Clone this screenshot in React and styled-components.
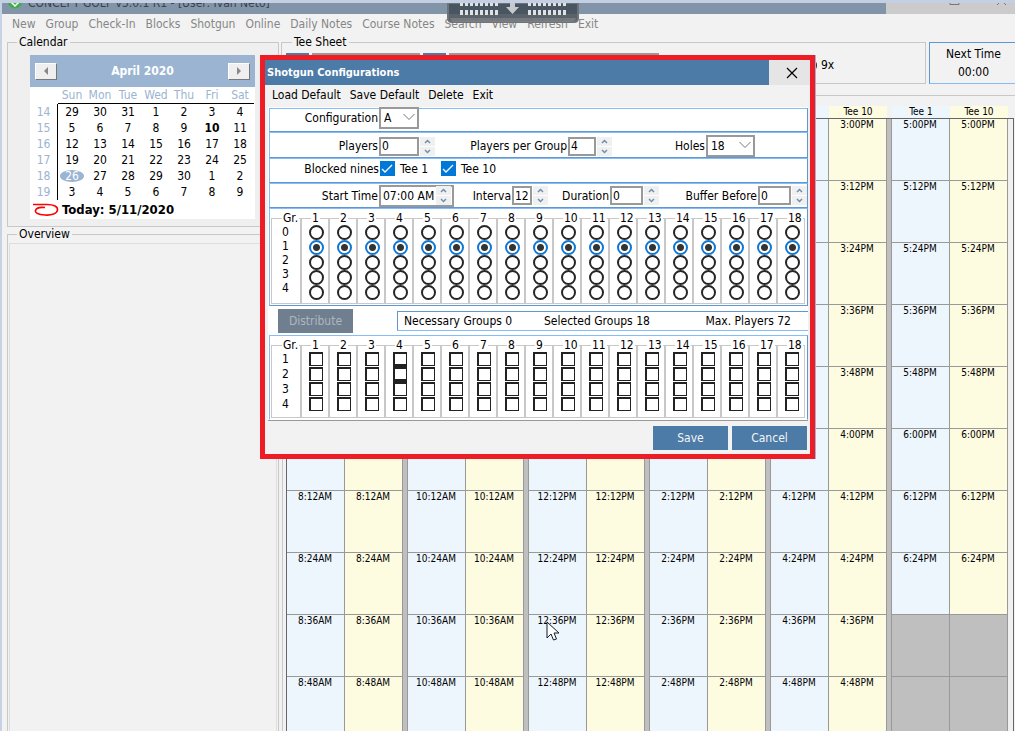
import React from "react";
import styled, { createGlobalStyle, css } from "styled-components";

const Global = createGlobalStyle`
  * { box-sizing: border-box; }
  body { margin: 0; background: #f2f2f2; }
  body, button, input, select {
    font-family: "DejaVu Sans Condensed", "Noto Sans", sans-serif;
    font-size: 12px;
    color: #000;
  }
  button, input, select, fieldset, legend { margin: 0; padding: 0; border-radius: 0; }
`;

const steel = "#4c7ba8";
const lightBlue = "#86bdf6";
const midBlue = "#5f97d3";
const line = "#c8c8c8";

/* ---------- application window ---------- */

const Page = styled.div`
  position: relative;
  display: flex;
  flex-direction: column;
  height: 100vh;
  overflow: hidden;
  border-top: 3px solid #c5cfe3;
  border-left: 2px solid #c8d2e6;
`;

const TitleBar = styled.header`
  display: flex;
  flex: none;
  height: 11px;
  overflow: hidden;
  background: #8295a8;
`;

const AppIcon = styled.svg`
  width: 16px;
  height: 11px;
  margin-left: 5px;
`;

const AppTitle = styled.h1`
  flex: 1;
  align-self: flex-end;
  margin: 0 0 3px 5px;
  font-size: 12px;
  line-height: 16px;
  font-weight: normal;
  color: #39424d;
  white-space: nowrap;
`;

const WindowButtons = styled.svg`
  width: 129px;
  height: 11px;
  background: #cbcbcb;
`;

const MenuBar = styled.nav`
  display: flex;
  flex: none;
  align-items: flex-start;
  gap: 10px;
  height: 20px;
  padding-left: 10px;
`;

const MenuItem = styled.button`
  border: 0;
  background: none;
  line-height: 20px;
  white-space: nowrap;
  color: ${(p) => (p.$dim ? "#868686" : "#000")};
`;

const Workspace = styled.main`
  display: flex;
  flex: 1;
  gap: 2px;
  min-height: 0;
  padding: 1px 0 0 5px;
`;

const SideColumn = styled.aside`
  display: flex;
  flex-direction: column;
  flex: none;
  width: 272px;
  margin-bottom: -8px;
`;

const Group = styled.fieldset`
  min-width: 0;
  border: 1px solid ${line};
  ${(p) => p.$grow && css`flex: 1; padding: 2px 1px 0;`}
  ${(p) => p.$calendar && css`padding: 6px 22px; background: #efefef; padding-bottom: 7px;`}
`;

const GroupTitle = styled.legend`
  margin-left: 10px;
  padding: 0 2px;
  line-height: 14px;
  ${(p) => p.$side && css`margin-left: ${p.$inset}px;`}
`;

const OverviewBody = styled.div`
  height: 100%;
  border: 1px solid #dedede;
`;

/* ---------- calendar ---------- */

const CalendarBox = styled.div`
  width: 225px;
  background: #fff;
`;

const CalendarHead = styled.div`
  display: flex;
  align-items: center;
  justify-content: space-between;
  height: 32px;
  padding: 0 5px;
  background: #9ab4d2;
  color: #fff;
  font-weight: bold;
`;

const NavButton = styled.button`
  width: 22px;
  height: 17px;
  background: #efefef;
  border: 1px solid;
  border-color: #fff #777 #777 #fff;
  line-height: 0;
`;

const Days = styled.table`
  border-spacing: 0;
  table-layout: fixed;
  width: 224px;
  th, td { padding: 0; height: 16px; line-height: 16px; text-align: center; }
  th { color: #9ab4d2; font-weight: normal; }
  thead th + th { border-bottom: 1px solid #000; }
  tbody th { border-right: 1px solid #000; }
`;

const Day = styled.td`
  font-weight: ${(p) => (p.$bold ? "bold" : "normal")};
  span {
    display: block;
    ${(p) => p.$selected && css`
      width: 24px;
      height: 12px;
      margin: 0 auto;
      line-height: 12px;
      border-radius: 50%;
      background: #9ab4d2;
      color: #fff;
    `}
  }
`;

const Today = styled.div`
  display: flex;
  align-items: center;
  gap: 3px;
  height: 19px;
  padding-left: 3px;
  font-size: 13px;
  font-weight: bold;
`;

/* ---------- tee sheet ---------- */

const SheetColumn = styled.section`
  flex: 1;
  min-width: 0;
`;

const SheetTop = styled.div`
  display: flex;
  gap: 3px;
`;

const Finder = styled(Group)`
  flex: 1;
  height: 49px;
`;

const FinderRow = styled.div`
  display: flex;
  align-items: flex-start;
  gap: 3px;
  padding: 4px 0 0 4px;
`;

const StepButton = styled.button`
  width: 23px;
  height: 24px;
  border: 0;
  background: ${steel};
`;

const FinderInput = styled.input`
  width: ${(p) => p.$w}px;
  height: 24px;
  border: 2px solid #999;
  background: #fff;
`;

const NineOption = styled.label`
  display: flex;
  align-items: center;
  gap: 4px;
  margin-left: 133px;
  line-height: 24px;
`;

const NextTime = styled.div`
  width: 86px;
  margin-top: 7px;
  padding: 2px 0 0 2px;
  border: 1px solid ${midBlue};
  border-bottom-color: ${lightBlue};
  border-right: 0;
  text-align: center;
  line-height: 18px;
`;

const SheetPanel = styled.div`
  margin: 11px 0 0 1px;
  padding: 10px 1px 0 3px;
  border: 1px solid ${line};
  border-width: 1px 0 0 1px;
`;

const Sheet = styled.table`
  width: 100%;
  table-layout: fixed;
  border-spacing: 0;
  font-size: 10px;
  th, td { padding: 0; text-align: center; vertical-align: top; line-height: 12px; }
  th { height: 13px; font-weight: normal; border-bottom: 1px solid #666; }
`;

const tint = { blue: "#edf6fd", yellow: "#fdfbe0", off: "#bfbfbf" };

const HeadCell = styled.th`
  background: ${(p) => tint[p.$tint] || "transparent"};
`;

const Slot = styled.td`
  && { padding-right: 1px; }
  height: 62px;
  background: ${(p) => tint[p.$tint]};
  border: 1px solid #999;
  border-width: 0 1px 1px 0;
`;

const Spacer = styled.td`
  background: #bfbfbf;
  border-right: 1px solid #999;
`;

const Edge = styled.td`
  background: ${(p) => (p.$left ? "#666" : "#f0f0f0")};
  border-right: 1px solid #666;
`;

/* ---------- overlays ---------- */

const RemoteTab = styled.svg`
  position: absolute;
  top: -3px;
  left: 445px;
  width: 132px;
  height: 24px;
`;

const Pointer = styled.svg`
  position: absolute;
  top: 618px;
  left: 544px;
  width: 14px;
  height: 21px;
`;

const Dialog = styled.section`
  position: absolute;
  top: 52px;
  left: 258px;
  width: 555px;
  height: 404px;
  border: 5px solid #ee1c24;
  background: #f2f2f2;
  box-shadow: 1px 0 0 #9db4d4;
`;

const DialogTitle = styled.div`
  display: flex;
  height: 25px;
  background: ${steel};
  h2 {
    flex: 1;
    margin: 0;
    padding-left: 2px;
    font-size: 11px;
    line-height: 25px;
    color: #fff;
  }
`;

const CloseButton = styled.button`
  width: 41px;
  border: 0;
  padding-left: 5px;
  background: #e5e5e5;
  line-height: 0;
`;

const DialogMenu = styled(MenuBar)`
  gap: 9px;
  height: 22px;
  padding-left: 7px;
`;

const Form = styled.form`
  display: grid;
  grid-template-rows: 24px 26px 25px 25px 98px 29px 85px;
  margin: 0 2px 0 3px;
  padding: 1px 0 0 1px;
  background: #fff;
  border-bottom: 1px solid #999;
`;

const Row = styled.div`
  display: flex;
  align-items: center;
  border: 1px solid ${midBlue};
  border-top-color: ${lightBlue};
  border-left-color: ${lightBlue};
  padding: ${(p) => (p.$low ? "2px 0 0" : p.$high ? "0 0 4px" : "0")};
`;

const Label = styled.label`
  flex: none;
  width: ${(p) => p.$w}px;
  padding-right: 1px;
  text-align: right;
  white-space: nowrap;
  overflow: hidden;
`;

const field = css`
  flex: none;
  width: ${(p) => p.$w}px;
  border: 2px solid #999;
  background: #fff;
`;

const TextBox = styled.input`
  ${field}
  height: 19px;
  padding-left: 1px;
`;

const TimeBox = styled.div`
  ${field}
  display: flex;
  align-items: center;
  height: 22px;
  input {
    width: 55px;
    height: 18px;
    border: 0;
    padding-left: 2px;
    background: none;
  }
`;

const SelectWrap = styled.div`
  ${field}
  position: relative;
  height: 22px;
  select {
    width: 100%;
    height: 18px;
    border: 0;
    padding-left: 3px;
    appearance: none;
    background: none;
  }
  svg {
    position: absolute;
    right: 2px;
    top: 4px;
    pointer-events: none;
  }
`;

const Stepper = styled.div`
  display: flex;
  flex-direction: column;
  gap: 1px;
  flex: none;
  width: ${(p) => (p.$inside ? 15 : 16)}px;
  padding-left: ${(p) => (p.$inside ? 0 : 1)}px;
  button {
    height: 9px;
    border: 0;
    background: #f0f0f0;
    line-height: 0;
  }
`;

const CheckLabel = styled.label`
  display: flex;
  align-items: center;
  gap: 5px;
  width: 61px;
`;

const BlueCheck = styled.input`
  appearance: none;
  width: 15px;
  height: 15px;
  background: #0078d7 url("data:image/svg+xml,%3Csvg xmlns='http://www.w3.org/2000/svg' viewBox='0 0 15 15'%3E%3Cpath d='M2 8l3 3 7-7' fill='none' stroke='white' stroke-width='1.3'/%3E%3C/svg%3E");
`;

const HoleBand = styled.div`
  display: grid;
  grid-template-columns: 30px repeat(18, 28px);
  align-items: stretch;
  padding: 3px 0 1px 1px;
  border: 1px solid ${midBlue};
  border-top-color: ${lightBlue};
  border-left-color: ${lightBlue};
  border-bottom-color: ${(p) => (p.$plain ? "transparent" : midBlue)};
`;

const HoleGroup = styled.fieldset`
  display: flex;
  flex-direction: column;
  min-width: 0;
  border: 1px solid ${line};
  legend {
    margin-left: 9px;
    padding: 0 1px;
    line-height: 13px;
  }
`;

const GroupNumbers = styled(HoleGroup)`
  legend { margin: 0 0 0 10px; white-space: nowrap; }
  span { padding-left: 10px; line-height: ${(p) => p.$step}px; }
`;

const HoleRadio = styled.input`
  appearance: none;
  flex: none;
  width: 15px;
  height: 15px;
  margin-left: 7px;
  border: 2px solid #262626;
  border-radius: 50%;
  background: #fff;
  &:checked {
    border-color: #0f78d4;
    background: radial-gradient(circle, #333 3px, #fff 4px);
  }
`;

const HoleCheck = styled.input`
  appearance: none;
  flex: none;
  width: 14px;
  height: 14px;
  margin: 0 0 1px 7px;
  border: 2px solid #222;
  border-right-width: 1px;
  border-bottom-width: 1px;
  background: #fff;
  ${(p) => p.$heavy && css`box-shadow: 0 1px 0 #222; border-bottom-width: 2px;`}
`;

const Summary = styled.div`
  display: flex;
  align-items: center;
  padding-left: 9px;
`;

const ActionButton = styled.button`
  width: 75px;
  height: 24px;
  border: 0;
  background: ${(p) => (p.disabled ? "#6f7f90" : steel)};
  color: ${(p) => (p.disabled ? "#b0b6bc" : "#f4f4f4")};
`;

const Totals = styled.div`
  display: grid;
  grid-template-columns: 140px 1fr auto;
  flex: 1;
  margin-left: 44px;
  padding: 0 17px 0 6px;
  line-height: 18px;
  border: 1px solid ${midBlue};
  border-bottom-color: ${lightBlue};
  border-right: 0;
`;

const Footer = styled.footer`
  display: flex;
  justify-content: flex-end;
  gap: 4px;
  padding: 5px 3px 0 0;
`;

/* ---------- data ---------- */

const menu = ["New", "Group", "Check-In", "Blocks", "Shotgun", "Online", "Daily Notes", "Course Notes", "Search", "View", "Refresh", "Exit"];
const weekdays = ["Sun", "Mon", "Tue", "Wed", "Thu", "Fri", "Sat"];
const weeks = [
  [14, 29, 30, 31, 1, 2, 3, 4],
  [15, 5, 6, 7, 8, 9, 10, 11],
  [16, 12, 13, 14, 15, 16, 17, 18],
  [17, 19, 20, 21, 22, 23, 24, 25],
  [18, 26, 27, 28, 29, 30, 1, 2],
  [19, 3, 4, 5, 6, 7, 8, 9],
];
const startHours = [7, 9, 11, 13, 15, 17];
const rows = Array.from({ length: 10 }, (_, i) => i);
const holes = Array.from({ length: 18 }, (_, i) => i + 1);

function slotTime(start, row) {
  const minutes = start * 60 + row * 12;
  const hour = Math.floor(minutes / 60);
  const mm = String(minutes % 60).padStart(2, "0");
  return `${hour > 12 ? hour - 12 : hour}:${mm}${hour >= 12 ? "PM" : "AM"}`;
}

/* ---------- parts ---------- */

const Spin = ({ name, inside }) => (
  <Stepper $inside={inside}>
    <button type="button" aria-label={`Increase ${name}`}>
      <svg width="7" height="5" viewBox="0 0 7 5"><path d="M1 4l2.5-2.5L6 4" fill="none" stroke="#6d8fb0" strokeWidth="1.5" /></svg>
    </button>
    <button type="button" aria-label={`Decrease ${name}`}>
      <svg width="7" height="5" viewBox="0 0 7 5"><path d="M1 1l2.5 2.5L6 1" fill="none" stroke="#6d8fb0" strokeWidth="1.5" /></svg>
    </button>
  </Stepper>
);

const NumberField = ({ id, label, labelWidth, width, value }) => (
  <>
    <Label htmlFor={id} $w={labelWidth}>{label}</Label>
    <TextBox id={id} $w={width} defaultValue={value} />
    <Spin name={label} />
  </>
);

const SelectField = ({ id, label, labelWidth, width, value }) => (
  <>
    <Label htmlFor={id} $w={labelWidth}>{label}</Label>
    <SelectWrap $w={width}>
      <select id={id} defaultValue={value}><option>{value}</option></select>
      <svg width="12" height="8" viewBox="0 0 12 8"><path d="M.5 1L6 6.500 11.500 1" fill="none" stroke="#777" /></svg>
    </SelectWrap>
  </>
);

function Calendar() {
  return (
    <CalendarBox>
      <CalendarHead>
        <NavButton aria-label="Previous month"><svg width="6" height="8"><path d="M5 0v8L1 4z" fill="#888" /></svg></NavButton>
        April 2020
        <NavButton aria-label="Next month"><svg width="6" height="8"><path d="M1 0v8l4-4z" fill="#888" /></svg></NavButton>
      </CalendarHead>
      <Days>
        <thead>
          <tr><th />{weekdays.map((d) => <th key={d}>{d}</th>)}</tr>
        </thead>
        <tbody>
          {weeks.map(([week, ...days]) => (
            <tr key={week}>
              <th>{week}</th>
              {days.map((d) => (
                <Day key={d} $bold={week === 15 && d === 10} $selected={d === 26}><span>{d}</span></Day>
              ))}
            </tr>
          ))}
        </tbody>
      </Days>
      <Today>
        <svg width="26" height="14" viewBox="0 0 26 14">
          <path d="M0 1.500h14c7 0 11 2 10.500 5.500S19 12.500 12 12 2 10 2.500 7.500 7 4 12 4.500" fill="none" stroke="#f00" strokeWidth="1.6" />
        </svg>
        Today: 5/11/2020
      </Today>
    </CalendarBox>
  );
}

function TeeSheet() {
  return (
    <Sheet>
      <colgroup>
        <col width="1" />
        {startHours.map((h, i) => (
          <React.Fragment key={h}>
            {i > 0 && <col width="5" />}
            <col /><col />
          </React.Fragment>
        ))}
        <col width="6" />
      </colgroup>
      <thead>
        <tr>
          <HeadCell />
          {startHours.map((h, i) => (
            <React.Fragment key={h}>
              {i > 0 && <HeadCell />}
              <HeadCell $tint="blue">Tee 1</HeadCell>
              <HeadCell $tint="yellow">Tee 10</HeadCell>
            </React.Fragment>
          ))}
          <HeadCell />
        </tr>
      </thead>
      <tbody>
        {rows.map((r) => (
          <tr key={r}>
            <Edge $left />
            {startHours.map((h, i) => {
              const closed = h === 17 && r > 7;
              const text = closed ? null : slotTime(h, r);
              return (
                <React.Fragment key={h}>
                  {i > 0 && <Spacer />}
                  <Slot $tint={closed ? "off" : "blue"}>{text}</Slot>
                  <Slot $tint={closed ? "off" : "yellow"}>{text}</Slot>
                </React.Fragment>
              );
            })}
            <Edge />
          </tr>
        ))}
      </tbody>
    </Sheet>
  );
}

function ShotgunDialog() {
  return (
    <Dialog role="dialog" aria-label="Shotgun Configurations">
      <DialogTitle>
        <h2>Shotgun Configurations</h2>
        <CloseButton aria-label="Close">
          <svg width="12" height="12"><path d="M1 1l10 10M11 1L1 11" stroke="#000" strokeWidth="1.2" /></svg>
        </CloseButton>
      </DialogTitle>
      <DialogMenu>
        {["Load Default", "Save Default", "Delete", "Exit"].map((m) => <MenuItem key={m}>{m}</MenuItem>)}
      </DialogMenu>
      <Form>
        <Row $high>
          <SelectField id="config" label="Configuration" labelWidth={109} width={40} value="A" />
        </Row>
        <Row $low>
          <NumberField id="players" label="Players" labelWidth={109} width={40} value="0" />
          <NumberField id="per-group" label="Players per Group" labelWidth={133} width={28} value="4" />
          <SelectField id="holes" label="Holes" labelWidth={94} width={49} value="18" />
        </Row>
        <Row $high role="group" aria-label="Blocked nines">
          <Label as="span" $w={110}>Blocked nines</Label>
          <CheckLabel><BlueCheck type="checkbox" defaultChecked />Tee 1</CheckLabel>
          <CheckLabel><BlueCheck type="checkbox" defaultChecked />Tee 10</CheckLabel>
        </Row>
        <Row>
          <Label htmlFor="start" $w={109}>Start Time</Label>
          <TimeBox $w={75}><input id="start" defaultValue="07:00 AM" /><Spin name="Start Time" inside /></TimeBox>
          <NumberField id="interval" label="Interva" labelWidth={58} width={20} value="12" />
          <NumberField id="duration" label="Duration" labelWidth={62} width={33} value="0" />
          <NumberField id="buffer" label="Buffer Before" labelWidth={99} width={33} value="0" />
        </Row>
        <HoleBand>
          <GroupNumbers $step={14}>
            <legend>Gr.</legend>
            {[0, 1, 2, 3, 4].map((n) => <span key={n}>{n}</span>)}
          </GroupNumbers>
          {holes.map((h) => (
            <HoleGroup key={h}>
              <legend>{h}</legend>
              {[0, 1, 2, 3, 4].map((n) => (
                <HoleRadio key={n} type="radio" name={`hole-${h}`} aria-label={`Hole ${h}, ${n} groups`} defaultChecked={n === 1} />
              ))}
            </HoleGroup>
          ))}
        </HoleBand>
        <Summary>
          <ActionButton type="button" disabled>Distribute</ActionButton>
          <Totals>
            <span>Necessary Groups 0</span>
            <span>Selected Groups 18</span>
            <span>Max. Players 72</span>
          </Totals>
        </Summary>
        <HoleBand $plain>
          <GroupNumbers $step={15}>
            <legend>Gr.</legend>
            {[1, 2, 3, 4].map((n) => <span key={n}>{n}</span>)}
          </GroupNumbers>
          {holes.map((h) => (
            <HoleGroup key={h}>
              <legend>{h}</legend>
              {[1, 2, 3, 4].map((n) => (
                <HoleCheck key={n} type="checkbox" aria-label={`Hole ${h}, group ${n}`} $heavy={h === 4 && n < 3} />
              ))}
            </HoleGroup>
          ))}
        </HoleBand>
      </Form>
      <Footer>
        <ActionButton type="button">Save</ActionButton>
        <ActionButton type="button">Cancel</ActionButton>
      </Footer>
    </Dialog>
  );
}

const dots = Array.from({ length: 8 }, (_, i) => i * 5);

export default function App() {
  return (
    <>
      <Global />
      <Page>
        <TitleBar>
          <AppIcon viewBox="0 0 16 11">
            <circle cx="8" cy="-2" r="7.500" fill="#3fae49" />
            <path d="M4 -1l4 4 4-4" fill="none" stroke="#fff" strokeWidth="1.5" />
          </AppIcon>
          <AppTitle>CONCEPT GOLF v5.0.1 R1 - [User: Ivan Neto]</AppTitle>
          <WindowButtons>
            <path d="M64 0v1.500h9V0M111 2l3-3M120 2l-3-3" fill="none" stroke="#777" />
          </WindowButtons>
        </TitleBar>
        <MenuBar>
          {menu.map((m) => <MenuItem key={m} $dim>{m}</MenuItem>)}
        </MenuBar>
        <Workspace>
          <SideColumn>
            <Group $calendar>
              <GroupTitle $side $inset={-13}>Calendar</GroupTitle>
              <Calendar />
            </Group>
            <Group $grow>
              <GroupTitle $side $inset={8}>Overview</GroupTitle>
              <OverviewBody />
            </Group>
          </SideColumn>
          <SheetColumn>
            <SheetTop>
              <Finder>
                <GroupTitle>Tee Sheet</GroupTitle>
                <FinderRow>
                  <StepButton aria-label="Previous day" />
                  <FinderInput $w={108} aria-label="Date" />
                  <StepButton aria-label="Next day" />
                  <FinderInput $w={210} aria-label="Course" />
                  <NineOption><HoleRadio type="radio" />9x</NineOption>
                </FinderRow>
              </Finder>
              <NextTime>Next Time<br />00:00</NextTime>
            </SheetTop>
            <SheetPanel><TeeSheet /></SheetPanel>
          </SheetColumn>
        </Workspace>
        <ShotgunDialog />
        <RemoteTab viewBox="0 0 132 24">
          <path d="M1 3h130v15q0 4-4 4H5q-4 0-4-4z" fill="#3f4a55" fillOpacity=".85" stroke="#6c737a" strokeWidth="2" />
          <path d="M3 18h126q-1 4-4 4H7q-3 0-4-4z" fill="#888" fillOpacity=".6" />
          <path d="M0 0h132v3H0z" fill="#c5cfe3" />
          {dots.map((d) => (
            <g key={d} fill="#dfe2e5">
              <path d={`M${13 + d} 3h3v3h-3zM${13 + d} 10h3v5h-3zM${81 + d} 3h3v3h-3zM${81 + d} 10h3v5h-3z`} />
            </g>
          ))}
          <path d="M63 3h5v4h4l-6.500 7L59 7h4z" fill="#c6cacf" />
        </RemoteTab>
        <Pointer viewBox="0 0 14 21">
          <path d="M1 1v16l4-4 2.500 6 3-1-2.500-6h5z" fill="#fff" stroke="#111a2c" />
        </Pointer>
      </Page>
    </>
  );
}
